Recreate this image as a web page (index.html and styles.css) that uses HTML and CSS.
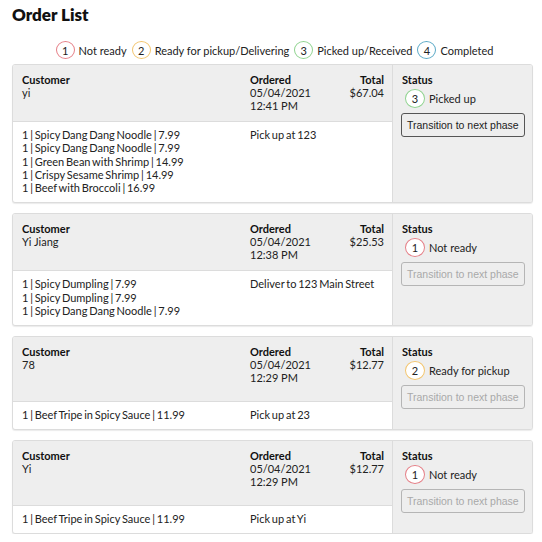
FILE: index.html
```html
<!DOCTYPE html>
<html>
<head>
<meta charset="utf-8">
<link rel="stylesheet" href="styles.css">
</head>
<body>
<h1 class="title">Order List</h1>
<div class="legend">
  <span class="badge b1">1</span><span class="legend-text">Not ready</span>
  <span class="badge b2">2</span><span class="legend-text">Ready for pickup/Delivering</span>
  <span class="badge b3">3</span><span class="legend-text">Picked up/Received</span>
  <span class="badge b4">4</span><span class="legend-text">Completed</span>
</div>
<div class="orders">
  <div class="card">
    <div class="main">
      <div class="row head">
        <div class="cell"><div class="label">Customer</div><div>yi</div></div>
        <div class="cell"><div class="label">Ordered</div><div>05/04/2021</div><div>12:41 PM</div></div>
        <div class="cell right"><div class="label">Total</div><div>$67.04</div></div>
      </div>
      <div class="row items">
        <div class="cell">
          <div>1 | Spicy Dang Dang Noodle | 7.99</div>
          <div>1 | Spicy Dang Dang Noodle | 7.99</div>
          <div>1 | Green Bean with Shrimp | 14.99</div>
          <div>1 | Crispy Sesame Shrimp | 14.99</div>
          <div>1 | Beef with Broccoli | 16.99</div>
        </div>
        <div class="cell wide">Pick up at 123</div>
      </div>
    </div>
    <div class="status">
      <div class="label">Status</div>
      <div class="state"><span class="badge b3">3</span><span>Picked up</span></div>
      <button class="next">Transition to next phase</button>
    </div>
  </div>

  <div class="card">
    <div class="main">
      <div class="row head">
        <div class="cell"><div class="label">Customer</div><div>Yi Jiang</div></div>
        <div class="cell"><div class="label">Ordered</div><div>05/04/2021</div><div>12:38 PM</div></div>
        <div class="cell right"><div class="label">Total</div><div>$25.53</div></div>
      </div>
      <div class="row items">
        <div class="cell">
          <div>1 | Spicy Dumpling | 7.99</div>
          <div>1 | Spicy Dumpling | 7.99</div>
          <div>1 | Spicy Dang Dang Noodle | 7.99</div>
        </div>
        <div class="cell wide">Deliver to 123 Main Street</div>
      </div>
    </div>
    <div class="status">
      <div class="label">Status</div>
      <div class="state"><span class="badge b1">1</span><span>Not ready</span></div>
      <button class="next" disabled>Transition to next phase</button>
    </div>
  </div>

  <div class="card">
    <div class="main">
      <div class="row head">
        <div class="cell"><div class="label">Customer</div><div>78</div></div>
        <div class="cell"><div class="label">Ordered</div><div>05/04/2021</div><div>12:29 PM</div></div>
        <div class="cell right"><div class="label">Total</div><div>$12.77</div></div>
      </div>
      <div class="row items">
        <div class="cell">
          <div>1 | Beef Tripe in Spicy Sauce | 11.99</div>
        </div>
        <div class="cell wide">Pick up at 23</div>
      </div>
    </div>
    <div class="status">
      <div class="label">Status</div>
      <div class="state"><span class="badge b2">2</span><span>Ready for pickup</span></div>
      <button class="next" disabled>Transition to next phase</button>
    </div>
  </div>

  <div class="card">
    <div class="main">
      <div class="row head">
        <div class="cell"><div class="label">Customer</div><div>Yi</div></div>
        <div class="cell"><div class="label">Ordered</div><div>05/04/2021</div><div>12:29 PM</div></div>
        <div class="cell right"><div class="label">Total</div><div>$12.77</div></div>
      </div>
      <div class="row items">
        <div class="cell">
          <div>1 | Beef Tripe in Spicy Sauce | 11.99</div>
        </div>
        <div class="cell wide">Pick up at Yi</div>
      </div>
    </div>
    <div class="status">
      <div class="label">Status</div>
      <div class="state"><span class="badge b1">1</span><span>Not ready</span></div>
      <button class="next" disabled>Transition to next phase</button>
    </div>
  </div>
</div>
</body>
</html>
```
FILE: styles.css
```css
html, body {
  margin: 0;
  padding: 0;
  background: #fff;
}
body {
  font-family: Lato, "Liberation Sans", sans-serif;
  font-size: 11px;
  line-height: 13px;
  color: #222;
}
.title {
  margin: 4px 12px 0;
  font-size: 17px;
  line-height: 22px;
  font-weight: 800;
  color: #111;
}
.legend {
  margin: 15px 9px 5px 12px;
  padding-left: 9px;
  display: flex;
  justify-content: center;
  align-items: center;
  height: 18px;
}
.legend-text {
  margin: 0 5px 0 4px;
}
.badge {
  box-sizing: border-box;
  display: inline-flex;
  align-items: center;
  justify-content: center;
  width: 19px;
  height: 18px;
  border: 1px solid #ccc;
  border-radius: 50%;
  background: #fff;
  font-size: 11px;
  color: #222;
}
.b1 { border-color: #e57f87; }
.b2 { border-color: #f3c56e; }
.b3 { border-color: #8fd38f; }
.b4 { border-color: #5ba9c6; }
.orders {
  margin: 0 9px 0 12px;
  display: flex;
  flex-direction: column;
  gap: 10px;
}
.card {
  display: flex;
  border: 1px solid #dcdcdc;
  border-radius: 3px;
  box-shadow: 0 1px 1px rgba(0,0,0,0.08);
  overflow: hidden;
  background: #fff;
}
.main {
  width: 379px;
  flex: none;
  display: flex;
  flex-direction: column;
  border-right: 1px solid #dcdcdc;
}
.row {
  display: grid;
  grid-template-columns: 228px 95px 1fr;
}
.head {
  flex: 1 0 auto;
  background: #eeeeee;
  border-bottom: 1px solid #dcdcdc;
  padding: 8px 0 9px;
}
.items {
  padding: 6px 0 8px;
  line-height: 13.3px;
  word-spacing: -1px;
}
.cell {
  padding: 0 8px 0 9px;
}
.cell.wide {
  grid-column: span 2;
}
.right {
  text-align: right;
}
.label {
  font-weight: 700;
  color: #111;
}
.status {
  flex: 1;
  min-width: 0;
  background: #eeeeee;
  padding: 8px 8px 20px 8px;
}
.status .label {
  padding-left: 1px;
}
.state {
  display: flex;
  align-items: center;
  gap: 4px;
  margin: 2px 0 5px 4px;
  height: 20px;
  white-space: nowrap;
}
.state .badge {
  width: 20px;
  height: 19px;
}
.next {
  font-family: "Liberation Sans", Arial, sans-serif;
  font-size: 10.5px;
  line-height: 14px;
  padding: 0 5px;
  height: 24px;
  white-space: nowrap;
  color: #222;
  background: transparent;
  border: 1px solid #555;
  border-radius: 3px;
}
.next:disabled {
  color: #a9a9a9;
  border-color: #b5b5b5;
}
```
